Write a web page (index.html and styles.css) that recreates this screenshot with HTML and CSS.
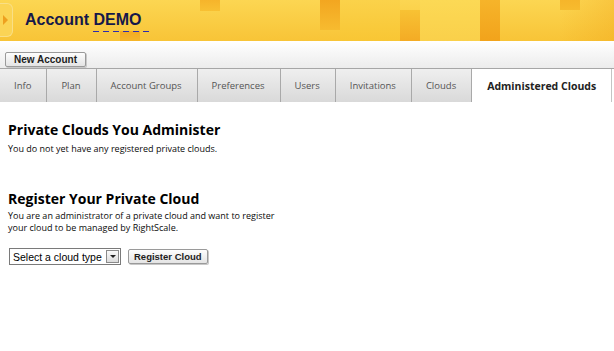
FILE: index.html
```html
<!DOCTYPE html>
<html lang="en">
<head>
    <meta charset="UTF-8">
    <title>Account DEMO - Administered Clouds</title>
    <link rel="stylesheet" href="styles.css">
</head>
<body>
    <header class="top-bar">
        <span class="side-tab"><span class="side-arrow"></span></span>
        <h1 class="account-title">Account <span class="account-name">DEMO</span></h1>
    </header>

    <div class="action-bar">
        <button class="small-btn">New Account</button>
    </div>

    <nav class="tabs">
        <a href="#info">Info</a>
        <a href="#plan">Plan</a>
        <a href="#groups">Account Groups</a>
        <a href="#preferences">Preferences</a>
        <a href="#users">Users</a>
        <a href="#invitations">Invitations</a>
        <a href="#clouds">Clouds</a>
        <a href="#administered" class="active">Administered Clouds</a>
    </nav>

    <main class="content">
        <!-- Existing clouds -->
        <section class="block">
            <h2>Private Clouds You Administer</h2>
            <p>You do not yet have any registered private clouds.</p>
        </section>

        <!-- Register form -->
        <section class="block register">
            <h2>Register Your Private Cloud</h2>
            <p>You are an administrator of a private cloud and want to register<br>your cloud to be managed by RightScale.</p>
            <form class="register-form">
                <span class="select-box">
                    <select>
                        <option>Select a cloud type</option>
                    </select>
                    <span class="select-arrow"></span>
                </span>
                <button type="button" class="small-btn register-btn">Register Cloud</button>
            </form>
        </section>
    </main>
</body>
</html>
```

FILE: styles.css
```css
/* Account page */
:root {
    --title-color: #15184a;
    --tab-border: #a9a9a9;
    --text-color: #0a0a0a;
}

* {
    box-sizing: border-box;
    margin: 0;
    padding: 0;
}

body {
    font-family: 'Open Sans', sans-serif;
    color: var(--text-color);
    background: #fff;
    width: 614px;
    overflow: hidden;
}

/* Yellow header with the mosaic */
.top-bar {
    display: flex;
    align-items: flex-start;
    height: 41px;
    background:
        linear-gradient(#f4aa22, #f6b62a) 120px 31px / 20px 10px no-repeat,
        linear-gradient(#f6b42b, #f8c033) 200px 0 / 20px 11px no-repeat,
        linear-gradient(#f3a620, #f7bb2f) 320px 0 / 20px 30px no-repeat,
        linear-gradient(#f8c234, #f4ab24) 400px 10px / 20px 31px no-repeat,
        linear-gradient(#f6b42a, #f2a31b) 480px 0 / 20px 41px no-repeat,
        linear-gradient(#f6b52a, #f7bb2e) 560px 0 / 20px 10px no-repeat,
        linear-gradient(#fbd24a, #f8c634) 340px 0 / 60px 41px no-repeat,
        linear-gradient(#fcd955, #fad04a) 420px 0 / 60px 41px no-repeat,
        linear-gradient(to right, rgba(255,255,255,0) 0, rgba(255,255,255,0) 560px, rgba(240,160,20,0.3) 614px),
        linear-gradient(#fcd652, #f8c437);
}

.side-tab {
    display: flex;
    align-items: center;
    width: 13px;
    height: 34px;
    margin-top: 3px;
    background: #fbd455;
    border: 1px solid #f9df86;
    border-left: none;
    border-radius: 0 6px 6px 0;
}

.side-arrow {
    margin-left: 3px;
    border-top: 5px solid transparent;
    border-bottom: 5px solid transparent;
    border-left: 5px solid #eea01f;
}

.account-title {
    margin: 11px 0 0 12px;
    font-family: 'Liberation Sans', Arial, sans-serif;
    font-size: 16px;
    line-height: 18px;
    color: var(--title-color);
}

.account-name {
    position: relative;
}

.account-name::after {
    content: "";
    position: absolute;
    left: 0;
    right: -9px;
    bottom: -4px;
    height: 1px;
    background: repeating-linear-gradient(to right, #2a2ab0 0, #2a2ab0 6px, transparent 6px, transparent 10px);
}

/* Button row */
.action-bar {
    height: 28px;
    padding: 5px 0 0 5px;
    background: linear-gradient(#fff, #ececec);
    border-bottom: 1px solid #a6a6a6;
}

.small-btn {
    font-family: 'Liberation Sans', Arial, sans-serif;
    font-weight: bold;
    font-size: 10px;
    color: #1d1d1d;
    height: 15px;
    padding: 0 8px;
    background: linear-gradient(#fdfdfd, #e4e4e4);
    border: 1px solid #9a9a9a;
    border-radius: 2px;
    box-shadow: 1px 1px 0 #c8c8c8;
    cursor: pointer;
}

.register-btn {
    font-size: 9.5px;
    padding: 0 5px;
}

/* Tabs */
.tabs {
    display: flex;
    height: 33px;
    background: #fff;
}

.tabs a {
    flex: none;
    display: flex;
    align-items: center;
    justify-content: center;
    white-space: nowrap;
    padding: 0 15px 0 14px;
    font-size: 9.5px;
    color: #555;
    text-decoration: none;
    background: linear-gradient(#efefef, #d9d9d9);
    border-right: 1px solid var(--tab-border);
}

.tabs a.active {
    padding: 0 15px;
    background: #fff;
    font-size: 10.5px;
    font-weight: bold;
    color: #222;
    border-right-color: #c4c4c4;
}

/* Content */
.content {
    padding: 18px 8px 0;
}

.block h2 {
    font-size: 14px;
    line-height: 19px;
    font-weight: bold;
    color: #000;
}

.block p {
    font-size: 9px;
    line-height: 12px;
    margin-top: 4px;
}

.register {
    margin-top: 34px;
}

.register p {
    margin-top: 2px;
}

.register-form {
    display: flex;
    align-items: center;
    gap: 7px;
    margin-top: 14px;
    padding-left: 1px;
}

.select-box {
    display: inline-flex;
    align-items: center;
    height: 17px;
    border: 1px solid #7a7a7a;
    background: #fff;
}

.select-box select {
    appearance: none;
    border: none;
    background: transparent;
    font-family: 'Liberation Sans', Arial, sans-serif;
    font-size: 10.5px;
    color: #000;
    padding: 0 3px;
    width: 96px;
}

.select-arrow {
    position: relative;
    width: 13px;
    height: 13px;
    margin-right: 1px;
    background: linear-gradient(#fafafa, #dcdcdc);
    border: 1px solid #8a8a8a;
}

.select-arrow::after {
    content: "";
    position: absolute;
    left: 3px;
    top: 4px;
    border-left: 3px solid transparent;
    border-right: 3px solid transparent;
    border-top: 3px solid #222;
}
```
